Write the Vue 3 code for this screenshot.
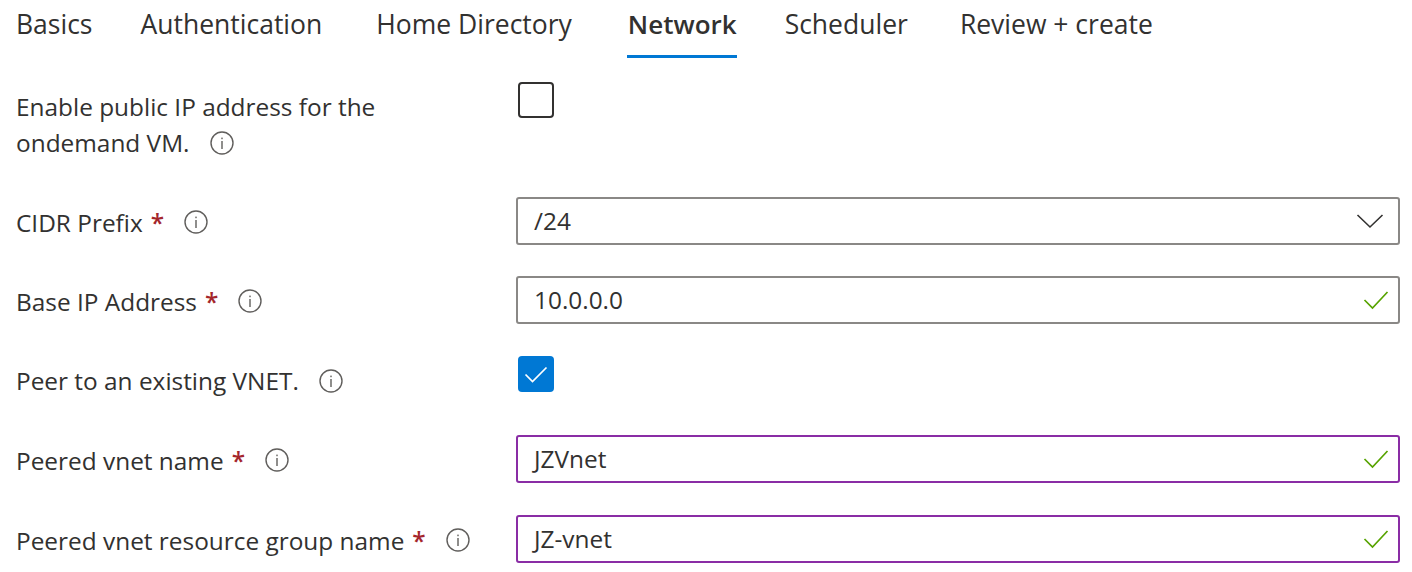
<template>
  <div class="page">
    <nav class="tabs">
      <a v-for="tab in tabs" :key="tab" class="tab" :class="{ active: tab === 'Network' }">{{ tab }}</a>
    </nav>

    <form class="form">
      <div v-for="row in rows" :key="row.label" class="row" :class="row.cls">
        <div class="label">
          <span>{{ row.label }}</span><span v-if="row.required" class="req">*</span>
          <svg class="info" :class="{ near: row.required }" viewBox="0 0 24 24" width="24" height="24">
            <circle cx="12" cy="12" r="11" fill="none" stroke="#605e5c" stroke-width="1.4" />
            <rect x="11.3" y="10" width="1.4" height="8" fill="#605e5c" />
            <rect x="11.3" y="6.6" width="1.4" height="1.6" fill="#605e5c" />
          </svg>
        </div>

        <div v-if="row.type === 'check'" class="check" :class="{ on: row.checked }">
          <svg v-if="row.checked" viewBox="0 0 36 36" width="36" height="36">
            <path d="M7.5 18.5 L14.5 25.5 L28.5 11.5" fill="none" stroke="#fff" stroke-width="1.7" />
          </svg>
        </div>

        <div v-else class="field" :class="{ dirty: row.dirty }">
          <span>{{ row.value }}</span>
          <svg v-if="row.type === 'select'" viewBox="0 0 28 16" width="28" height="16">
            <path d="M1.5 2 L14 14 L26.500 2" fill="none" stroke="#323130" stroke-width="1.6" />
          </svg>
          <svg v-else class="ok" viewBox="0 0 26 20" width="26" height="20">
            <path d="M1.500 10 L9.500 18 L24.500 2" fill="none" stroke="#57a300" stroke-width="1.7" />
          </svg>
        </div>
      </div>
    </form>
  </div>
</template>

<script setup>
const tabs = ['Basics', 'Authentication', 'Home Directory', 'Network', 'Scheduler', 'Review + create']

const rows = [
  { label: 'Enable public IP address for the ondemand VM.', type: 'check', checked: false, cls: 'first' },
  { label: 'CIDR Prefix', required: true, type: 'select', value: '/24' },
  { label: 'Base IP Address', required: true, type: 'text', value: '10.0.0.0', cls: 'wide' },
  { label: 'Peer to an existing VNET.', type: 'check', checked: true, cls: 'peer' },
  { label: 'Peered vnet name', required: true, type: 'text', value: 'JZVnet', dirty: true, cls: 'wide' },
  { label: 'Peered vnet resource group name', required: true, type: 'text', value: 'JZ-vnet', dirty: true },
]
</script>

<style>
html,
body {
  background: #fff;
}
</style>

<style scoped>
.page {
  width: 1412px;
  height: 572px;
  overflow: hidden;
  font-family: "Open Sans", "Noto Sans", sans-serif;
  font-size: 24.4px;
  color: #323130;
}

.tabs {
  display: flex;
  height: 58px;
  padding-left: 16px;
  font-size: 26.5px;
}

.tab {
  height: 58px;
  box-sizing: border-box;
  padding-top: 6px;
  line-height: 36px;
  white-space: nowrap;
}

.tab:nth-child(2) {
  margin-left: 48px;
}

.tab:nth-child(3) {
  margin-left: 54px;
}

.tab:nth-child(4) {
  margin-left: 55px;
}

.tab:nth-child(5) {
  margin-left: 48px;
}

.tab:nth-child(6) {
  margin-left: 52px;
}

.tab.active {
  font-weight: 600;
  font-size: 26px;
  border-bottom: 3px solid #0078d4;
  padding-left: 1px;
}

.form {
  display: flex;
  flex-direction: column;
  padding: 24px 12px 0 16px;
}

.row {
  display: grid;
  grid-template-columns: 500px 1fr;
  align-items: center;
  min-height: 48px;
  margin-bottom: 31px;
}

.row.first {
  align-items: start;
  margin-bottom: 36px;
  min-height: 76px;
}

.row.first .label {
  padding-top: 7px;
  width: 400px;
}

.row.peer {
  align-items: start;
  min-height: 48px;
}

.row.peer .label {
  padding-top: 7px;
}

.row.wide {
  margin-bottom: 32px;
}

.label {
  line-height: 36px;
  padding-top: 4px;
}

.req {
  color: #a4262c;
  font-weight: 600;
  margin-left: 8px;
}

.info {
  margin-left: 20px;
  vertical-align: -3px;
}

.info.near {
  margin-left: 20px;
  vertical-align: -2px;
}

.check {
  width: 36px;
  height: 36px;
  margin-left: 2px;
  box-sizing: border-box;
  border: 2px solid #323130;
  border-radius: 4px;
}

.check.on {
  background: #0078d4;
  border: 0;
}

.check svg {
  display: block;
}

.field {
  height: 48px;
  box-sizing: border-box;
  border: 2px solid #8a8886;
  border-radius: 3px;
  display: flex;
  align-items: center;
  justify-content: space-between;
  padding: 0 14px 0 16px;
}

.field span {
  position: relative;
  top: -1px;
}

.field.dirty {
  border-color: #8a2da5;
}

.ok {
  margin-right: -5px;
}
</style>
